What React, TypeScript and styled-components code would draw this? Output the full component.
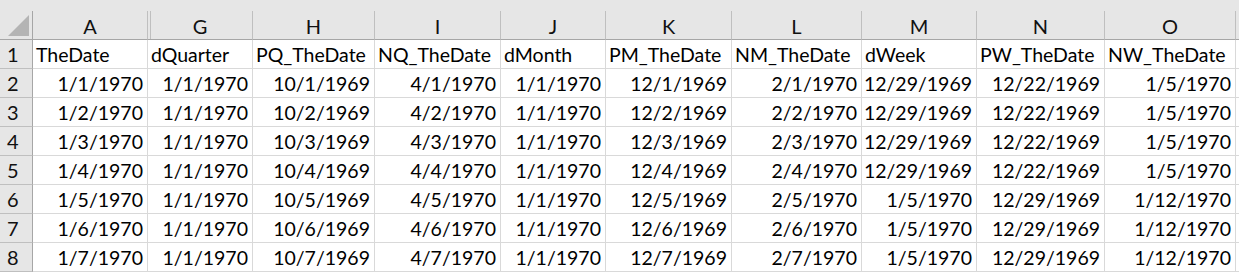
import React from "react";
import styled, { createGlobalStyle } from "styled-components";

const GlobalStyle = createGlobalStyle`
  html, body { margin: 0; padding: 0; background: #ffffff; }
  body { font-family: Lato, "Open Sans", sans-serif; }
`;

const COLS: { letter: string; width: number }[] = [
  { letter: "A", width: 115 },
  { letter: "G", width: 105 },
  { letter: "H", width: 122 },
  { letter: "I", width: 126 },
  { letter: "J", width: 105 },
  { letter: "K", width: 126 },
  { letter: "L", width: 130 },
  { letter: "M", width: 115 },
  { letter: "N", width: 128 },
  { letter: "O", width: 131 },
];

const HEADERS = [
  "TheDate",
  "dQuarter",
  "PQ_TheDate",
  "NQ_TheDate",
  "dMonth",
  "PM_TheDate",
  "NM_TheDate",
  "dWeek",
  "PW_TheDate",
  "NW_TheDate",
];

const ROWS: string[][] = [
  ["1/1/1970", "1/1/1970", "10/1/1969", "4/1/1970", "1/1/1970", "12/1/1969", "2/1/1970", "12/29/1969", "12/22/1969", "1/5/1970"],
  ["1/2/1970", "1/1/1970", "10/2/1969", "4/2/1970", "1/1/1970", "12/2/1969", "2/2/1970", "12/29/1969", "12/22/1969", "1/5/1970"],
  ["1/3/1970", "1/1/1970", "10/3/1969", "4/3/1970", "1/1/1970", "12/3/1969", "2/3/1970", "12/29/1969", "12/22/1969", "1/5/1970"],
  ["1/4/1970", "1/1/1970", "10/4/1969", "4/4/1970", "1/1/1970", "12/4/1969", "2/4/1970", "12/29/1969", "12/22/1969", "1/5/1970"],
  ["1/5/1970", "1/1/1970", "10/5/1969", "4/5/1970", "1/1/1970", "12/5/1969", "2/5/1970", "1/5/1970", "12/29/1969", "1/12/1970"],
  ["1/6/1970", "1/1/1970", "10/6/1969", "4/6/1970", "1/1/1970", "12/6/1969", "2/6/1970", "1/5/1970", "12/29/1969", "1/12/1970"],
  ["1/7/1970", "1/1/1970", "10/7/1969", "4/7/1970", "1/1/1970", "12/7/1969", "2/7/1970", "1/5/1970", "12/29/1969", "1/12/1970"],
];

const HEADER_BG = "#e6e6e6";
const HEADER_LINE = "#bfbfbf";
const HEADER_EDGE = "#a6a6a6";
const GRID = "#d9d9d9";

const Sheet = styled.div`
  display: grid;
  grid-template-columns: 33px ${COLS.map((c) => `${c.width}px`).join(" ")} 1fr;
  grid-template-rows: 11px 29px repeat(${ROWS.length + 1}, 29px);
  width: 1239px;
  height: 272px;
  overflow: hidden;
  font-family: Lato, "Open Sans", sans-serif;
  font-size: 19.5px;
  color: #000;
  background: #fff;
`;

const TopStrip = styled.div`
  grid-column: 1 / -1;
  background: ${HEADER_BG};
`;

const Corner = styled.div`
  box-sizing: border-box;
  background: ${HEADER_BG};
  border-right: 1px solid ${HEADER_EDGE};
  border-bottom: 1px solid ${HEADER_EDGE};
  display: flex;
  align-items: flex-end;
  justify-content: flex-end;
  padding: 0 3px 3px 0;
`;

const CornerTriangle = styled.div`
  width: 21px;
  height: 21px;
  background: #b4b4b4;
  clip-path: polygon(100% 0, 100% 100%, 0 100%);
`;

const ColHeader = styled.div<{ $hiddenBefore?: boolean }>`
  box-sizing: border-box;
  background: ${HEADER_BG};
  border-right: 1px solid ${HEADER_LINE};
  border-bottom: 1px solid ${HEADER_EDGE};
  display: flex;
  align-items: center;
  justify-content: center;
  color: #111;
  font-size: 20px;
  padding-top: 1px;
  box-shadow: ${(p) =>
    p.$hiddenBefore ? `inset 2px 0 0 ${HEADER_BG}, inset 3px 0 0 ${HEADER_LINE}` : "none"};
`;

const HeaderFiller = styled.div`
  box-sizing: border-box;
  background: ${HEADER_BG};
  border-bottom: 1px solid ${HEADER_EDGE};
`;

const RowHeader = styled.div`
  box-sizing: border-box;
  background: ${HEADER_BG};
  border-right: 1px solid ${HEADER_EDGE};
  border-bottom: 1px solid ${HEADER_LINE};
  display: flex;
  align-items: flex-end;
  padding: 0 0 4px 7px;
  color: #111;
  font-size: 20px;
  line-height: 1;
`;

const Cell = styled.div<{ $align: "left" | "right" }>`
  box-sizing: border-box;
  border-right: 1px solid ${GRID};
  border-bottom: 1px solid ${GRID};
  display: flex;
  align-items: flex-end;
  justify-content: ${(p) => (p.$align === "right" ? "flex-end" : "flex-start")};
  padding: ${(p) => (p.$align === "right" ? "0 4px 4px 0" : "0 2px 4px 3px")};
  white-space: nowrap;
  overflow: hidden;
  line-height: 1;
`;

const RowFiller = styled.div`
  box-sizing: border-box;
  border-bottom: 1px solid ${GRID};
`;

export default function App() {
  const body = [HEADERS, ...ROWS];
  return (
    <>
      <GlobalStyle />
      <Sheet>
        <TopStrip />
        <Corner>
          <CornerTriangle />
        </Corner>
        {COLS.map((c, i) => (
          <ColHeader key={c.letter} $hiddenBefore={i === 1}>
            {c.letter}
          </ColHeader>
        ))}
        <HeaderFiller />
        {body.map((row, r) => (
          <React.Fragment key={r}>
            <RowHeader>{r + 1}</RowHeader>
            {row.map((v, c) => (
              <Cell key={c} $align={r === 0 ? "left" : "right"}>
                {v}
              </Cell>
            ))}
            <RowFiller />
          </React.Fragment>
        ))}
      </Sheet>
    </>
  );
}
